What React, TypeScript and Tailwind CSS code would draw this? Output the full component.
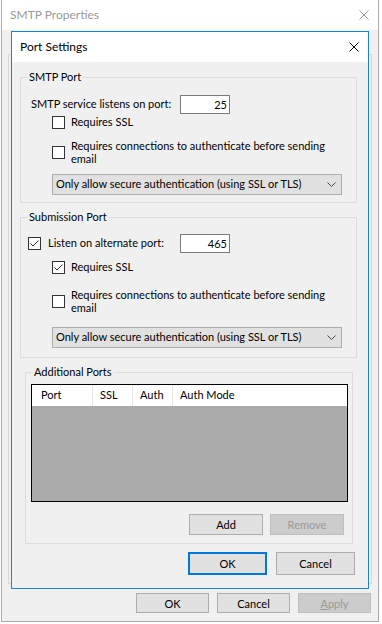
import React from 'react';

const CloseIcon = ({ color }: { color: string }) => (
  <svg width="10" height="10" viewBox="0 0 10 10" className="block">
    <path d="M0.5 0.5 L9.5 9.5 M9.5 0.5 L0.5 9.5" stroke={color} strokeWidth="1" fill="none" />
  </svg>
);

const Checkbox = ({ checked = false }: { checked?: boolean }) => (
  <div className="w-[13px] h-[13px] shrink-0 border border-[#333333] bg-white flex items-center justify-center">
    {checked && (
      <svg width="11" height="11" viewBox="0 0 11 11" className="block">
        <path d="M1.5 5.5 L4 8 L9.5 2.5" stroke="#333333" strokeWidth="1" fill="none" />
      </svg>
    )}
  </div>
);

const PortInput = ({ value }: { value: string }) => (
  <div className="w-[50px] h-[19px] shrink-0 border border-[#7a7a7a] bg-white flex items-center justify-end pr-[2px] leading-none">
    {value}
  </div>
);

const Dropdown = ({ className }: { className: string }) => (
  <div
    className={`w-[290px] h-[21px] border border-[#adadad] bg-[#e1e1e1] flex items-center justify-between pl-[3px] pr-[5px] ${className}`}
  >
    <span className="whitespace-nowrap">Only allow secure authentication (using SSL or TLS)</span>
    <svg width="9" height="5" viewBox="0 0 9 5" className="block">
      <path d="M0.5 0.5 L4.5 4.5 L8.5 0.5" stroke="#444444" strokeWidth="1" fill="none" />
    </svg>
  </div>
);

const GroupLabel = ({ text }: { text: string }) => (
  <span className="absolute -top-[9px] left-[7px] px-[1px] bg-[#f0f0f0] leading-[15px] whitespace-nowrap">{text}</span>
);

const AuthRow = ({ className }: { className: string }) => (
  <div className={`flex items-center ${className}`}>
    <Checkbox />
    <div className="ml-[6px] leading-[13px] whitespace-nowrap">
      <div>Requires connections to authenticate before sending</div>
      <div>email</div>
    </div>
  </div>
);

const Button = ({
  label,
  className,
  disabled = false,
}: {
  label: React.ReactNode;
  className: string;
  disabled?: boolean;
}) => (
  <div
    className={`flex items-center justify-center leading-none ${
      disabled ? 'bg-[#cccccc] border border-[#bfbfbf] text-[#9a9a9a]' : 'bg-[#e1e1e1] border border-[#adadad]'
    } ${className}`}
  >
    {label}
  </div>
);

export default function App() {
  return (
    <div className="relative w-[382px] h-[624px] bg-white overflow-hidden text-[11px] text-black font-['Lato',sans-serif]">
      {/* SMTP Properties window (behind) */}
      <div className="ml-[1px] w-[378px] h-[622px] flex flex-col border-x border-b border-[#aaaaaa] bg-[#f0f0f0]">
        <div className="h-[30px] shrink-0 bg-white flex items-center justify-between pl-[8px] pr-[9px]">
          <span className="text-[12px] text-[#999999]">SMTP Properties</span>
          <CloseIcon color="#999999" />
        </div>
        <div className="ml-[6px] mt-[24px] w-[364px] h-[530px] shrink-0 border border-[#d9d9d9]" />
        <div className="mt-[9px] flex justify-end gap-[8px] pr-[7px]">
          <Button label="OK" className="w-[73px] h-[20px]" />
          <Button label="Cancel" className="w-[73px] h-[20px]" />
          <Button
            label={
              <span>
                <span className="underline">A</span>pply
              </span>
            }
            className="w-[73px] h-[20px]"
            disabled
          />
        </div>
      </div>

      {/* Port Settings dialog */}
      <div className="absolute left-[11px] top-[31px] w-[358px] h-[558px] border border-[#1883d7] bg-[#f0f0f0] flex flex-col">
        <div className="h-[30px] shrink-0 bg-white flex items-center justify-between pl-[8px] pr-[9px]">
          <span className="text-[12px]">Port Settings</span>
          <CloseIcon color="#000000" />
        </div>

        {/* SMTP Port */}
        <div className="relative ml-[8px] mt-[15px] w-[337px] h-[126px] shrink-0 border border-[#dcdcdc] pt-[17px] pl-[10px]">
          <GroupLabel text="SMTP Port" />
          <div className="flex items-center h-[19px]">
            <span className="w-[149px] shrink-0 whitespace-nowrap">SMTP service listens on port:</span>
            <PortInput value="25" />
          </div>
          <div className="mt-[2px] ml-[21px] flex items-center h-[13px]">
            <Checkbox />
            <span className="ml-[6px] whitespace-nowrap">Requires SSL</span>
          </div>
          <AuthRow className="mt-[10px] ml-[21px]" />
          <Dropdown className="mt-[9px] ml-[21px]" />
        </div>

        {/* Submission Port */}
        <div className="relative ml-[8px] mt-[14px] w-[337px] h-[141px] shrink-0 border border-[#dcdcdc] pt-[16px] pl-[7px]">
          <GroupLabel text="Submission Port" />
          <div className="flex items-center h-[19px]">
            <Checkbox checked />
            <span className="ml-[7px] w-[132px] shrink-0 whitespace-nowrap">Listen on alternate port:</span>
            <PortInput value="465" />
          </div>
          <div className="mt-[8px] ml-[24px] flex items-center h-[13px]">
            <Checkbox checked />
            <span className="ml-[6px] whitespace-nowrap">Requires SSL</span>
          </div>
          <AuthRow className="mt-[14px] ml-[24px]" />
          <Dropdown className="mt-[13px] ml-[24px]" />
        </div>

        {/* Additional Ports */}
        <div className="relative ml-[13px] mt-[14px] w-[328px] h-[172px] shrink-0 border border-[#dcdcdc] pt-[11px] pl-[5px]">
          <GroupLabel text="Additional Ports" />
          <div className="w-[317px] h-[118px] border border-black bg-[#ababab] flex flex-col">
            <div className="h-[21px] bg-white flex items-center">
              <div className="w-[61px] h-full border-r border-[#e5e5e5] pl-[9px] flex items-center">Port</div>
              <div className="w-[40px] h-full border-r border-[#e5e5e5] pl-[7px] flex items-center">SSL</div>
              <div className="w-[40px] h-full border-r border-[#e5e5e5] pl-[7px] flex items-center">Auth</div>
              <div className="pl-[7px] flex items-center">Auth Mode</div>
            </div>
          </div>
          <div className="mt-[12px] flex justify-end gap-[7px] pr-[8px]">
            <Button label="Add" className="w-[74px] h-[21px]" />
            <Button label="Remove" className="w-[74px] h-[21px]" disabled />
          </div>
        </div>

        <div className="mt-[8px] flex justify-end gap-[9px] pr-[13px]">
          <div className="w-[79px] h-[23px] border-2 border-[#0078d7] bg-[#e1e1e1] flex items-center justify-center leading-none">
            OK
          </div>
          <Button label="Cancel" className="w-[79px] h-[23px]" />
        </div>
      </div>
    </div>
  );
}
